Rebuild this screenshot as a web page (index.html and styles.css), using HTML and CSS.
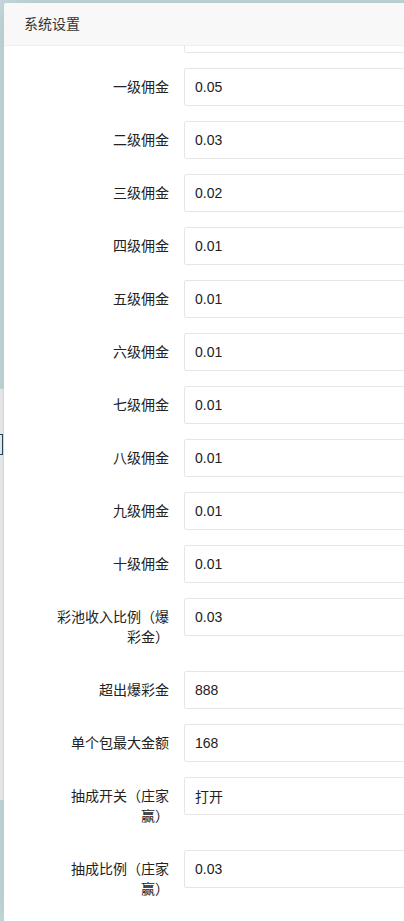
FILE: index.html
```html
<!DOCTYPE html>
<html lang="zh-CN">
<head>
  <meta charset="UTF-8">
  <meta name="viewport" content="width=device-width, initial-scale=1.0">
  <title>系统设置</title>
  <link rel="stylesheet" href="styles.css">
</head>
<body>
  <div class="edge">
    <div class="edge__page">
      <span class="edge__box"></span>
    </div>
  </div>

  <div class="layer">
    <div class="layer__title">系统设置</div>
    <div class="layer__body">
      <form class="form">
        <div class="form__item">
          <label class="form__label"></label>
          <div class="form__block"><input class="form__input" type="text" value=""></div>
        </div>
        <div class="form__item">
          <label class="form__label">一级佣金</label>
          <div class="form__block"><input class="form__input" type="text" value="0.05"></div>
        </div>
        <div class="form__item">
          <label class="form__label">二级佣金</label>
          <div class="form__block"><input class="form__input" type="text" value="0.03"></div>
        </div>
        <div class="form__item">
          <label class="form__label">三级佣金</label>
          <div class="form__block"><input class="form__input" type="text" value="0.02"></div>
        </div>
        <div class="form__item">
          <label class="form__label">四级佣金</label>
          <div class="form__block"><input class="form__input" type="text" value="0.01"></div>
        </div>
        <div class="form__item">
          <label class="form__label">五级佣金</label>
          <div class="form__block"><input class="form__input" type="text" value="0.01"></div>
        </div>
        <div class="form__item">
          <label class="form__label">六级佣金</label>
          <div class="form__block"><input class="form__input" type="text" value="0.01"></div>
        </div>
        <div class="form__item">
          <label class="form__label">七级佣金</label>
          <div class="form__block"><input class="form__input" type="text" value="0.01"></div>
        </div>
        <div class="form__item">
          <label class="form__label">八级佣金</label>
          <div class="form__block"><input class="form__input" type="text" value="0.01"></div>
        </div>
        <div class="form__item">
          <label class="form__label">九级佣金</label>
          <div class="form__block"><input class="form__input" type="text" value="0.01"></div>
        </div>
        <div class="form__item">
          <label class="form__label">十级佣金</label>
          <div class="form__block"><input class="form__input" type="text" value="0.01"></div>
        </div>
        <div class="form__item">
          <label class="form__label">彩池收入比例（爆彩金）</label>
          <div class="form__block"><input class="form__input" type="text" value="0.03"></div>
        </div>
        <div class="form__item">
          <label class="form__label">超出爆彩金</label>
          <div class="form__block"><input class="form__input" type="text" value="888"></div>
        </div>
        <div class="form__item">
          <label class="form__label">单个包最大金额</label>
          <div class="form__block"><input class="form__input" type="text" value="168"></div>
        </div>
        <div class="form__item">
          <label class="form__label">抽成开关（庄家赢）</label>
          <div class="form__block"><input class="form__input" type="text" value="打开"></div>
        </div>
        <div class="form__item">
          <label class="form__label">抽成比例（庄家赢）</label>
          <div class="form__block"><input class="form__input" type="text" value="0.03"></div>
        </div>
      </form>
    </div>
  </div>
</body>
</html>
```

FILE: styles.css
```css
:root {
  --color-backdrop: #c5dcdf;
  --color-text: #333;
  --color-border: #e6e6e6;
  --font: "Liberation Sans", "Noto Sans CJK SC", sans-serif;
}
* {
  box-sizing: border-box;
}
body {
  display: flex;
  margin: 0;
  height: 100vh;
  overflow: hidden;
  background-color: var(--color-backdrop);
  font-family: var(--font);
  font-size: 14px;
  color: var(--color-text);
}
.edge {
  flex: 0 0 4px;
  padding-top: 389px;
}
.edge__page {
  display: flex;
  flex-direction: column;
  height: 411px;
  padding-top: 45px;
  background-color: #f3f3f3;
  border-right: 1px solid #e4e4e4;
}
.edge__box {
  display: block;
  width: 3px;
  height: 21px;
  border: 1px solid #1f4b63;
  border-left: 0;
}
.layer {
  flex: 0 0 640px;
  display: flex;
  flex-direction: column;
  margin-top: 3px;
  border-radius: 3px 0 0 0;
  background-color: #fff;
  box-shadow: 1px 1px 30px rgba(0, 0, 0, .15);
  overflow: hidden;
}
.layer__title {
  flex: 0 0 43px;
  padding: 0 20px;
  line-height: 42px;
  background-color: #f8f8f8;
  border-bottom: 1px solid #eee;
  border-radius: 3px 0 0 0;
}
.layer__body {
  flex: 1;
  overflow: hidden;
}
.form {
  margin-top: -31px;
  padding-left: 30px;
}
.form__item {
  display: flex;
  margin-bottom: 15px;
}
.form__label {
  flex: 0 0 150px;
  padding: 9px 15px;
  line-height: 20px;
  text-align: right;
  color: #222;
  text-spacing-trim: space-all;
}
.form__block {
  flex: 1;
}
.form__input {
  display: block;
  width: 100%;
  height: 38px;
  margin: 0;
  padding: 0 10px;
  border: 1px solid var(--color-border);
  border-radius: 2px;
  outline: 0;
  background-color: #fff;
  font-family: var(--font);
  font-size: 14px;
  color: #222;
}
```
